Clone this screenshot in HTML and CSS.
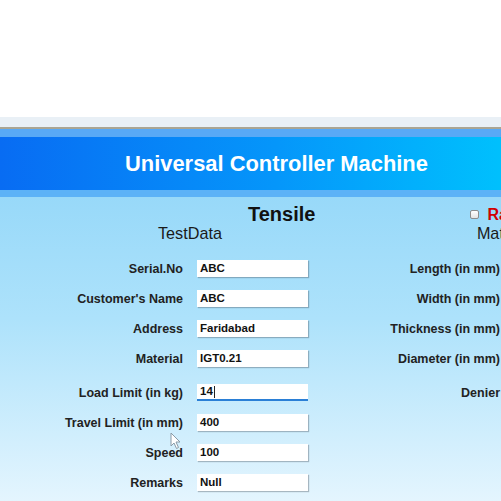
FILE: index.html
```html
<!DOCTYPE html>
<html lang="en">
<head>
    <meta charset="UTF-8">
    <title>Universal Controller Machine</title>
    <link rel="stylesheet" href="styles.css">
</head>
<body>
    <div class="top-space"></div>
    <div class="toolbar-strip"></div>
    <div class="banner">
        <h1>Universal Controller Machine</h1>
    </div>
    <div class="main">
        <div class="title-row">
            <h2>Tensile</h2>
            <label class="raw-check"><span class="check-box"></span><span class="raw-text">Raw Data</span></label>
        </div>
        <div class="sub-row">
            <span class="sub-left">TestData</span>
            <span class="sub-right">Material Data</span>
        </div>
        <div class="form-rows">
            <div class="form-row">
                <label>Serial.No</label>
                <div class="field">ABC</div>
                <label class="right-label">Length (in mm)</label>
            </div>
            <div class="form-row">
                <label>Customer's Name</label>
                <div class="field">ABC</div>
                <label class="right-label">Width (in mm)</label>
            </div>
            <div class="form-row">
                <label>Address</label>
                <div class="field">Faridabad</div>
                <label class="right-label">Thickness (in mm)</label>
            </div>
            <div class="form-row">
                <label>Material</label>
                <div class="field">IGT0.21</div>
                <label class="right-label">Diameter (in mm)</label>
            </div>
            <div class="form-row spaced">
                <label>Load Limit (in kg)</label>
                <div class="field focused">14<span class="caret"></span></div>
                <label class="right-label">Denier</label>
            </div>
            <div class="form-row">
                <label>Travel Limit (in mm)</label>
                <div class="field">400</div>
                <label class="right-label"></label>
            </div>
            <div class="form-row">
                <label>Speed</label>
                <div class="field">100</div>
                <label class="right-label"></label>
            </div>
            <div class="form-row">
                <label>Remarks</label>
                <div class="field">Null</div>
                <label class="right-label"></label>
            </div>
        </div>
        <svg class="pointer" width="12" height="18" viewBox="0 0 12 18">
            <path d="M1 1 L1 14 L4 11 L6.5 16.5 L8.5 15.5 L6 10 L10 10 Z" fill="#fff" stroke="#8a9aa6" stroke-width="1"/>
        </svg>
    </div>
</body>
</html>
```

FILE: styles.css
```css
body {
    margin: 0;
    font-family: "Liberation Sans", Arial, sans-serif;
    overflow: hidden;
    width: 501px;
    height: 501px;
    background: #fff;
}
.top-space {
    height: 117px;
}
.toolbar-strip {
    height: 10px;
    background-color: #e9f0f6;
    border-bottom: 2px solid #a9a594;
}
.banner {
    height: 53px;
    border-top: 8px solid #58a9f6;
    border-bottom: 7px solid #5cb2f7;
    background: linear-gradient(to right, #086cf3, #0596fa 55%, #00c0fd);
    display: flex;
    align-items: center;
    padding-left: 125px;
}
.banner h1 {
    margin: 0;
    color: #fff;
    font-size: 21.9px;
    font-weight: bold;
    white-space: nowrap;
}
.main {
    position: relative;
    height: 304px;
    padding-top: 8px;
    box-sizing: border-box;
    background: linear-gradient(to bottom, #98d9f9, #ade2fb 40%, #e4f5fe);
}
.title-row {
    display: flex;
    align-items: center;
    height: 19px;
    padding-left: 248px;
    white-space: nowrap;
}
.title-row h2 {
    margin: 0;
    font-size: 20px;
    line-height: 19px;
    font-weight: bold;
    color: #111;
}
.raw-check {
    display: flex;
    align-items: center;
    margin-left: 155px;
    flex-shrink: 0;
}
.check-box {
    width: 7px;
    height: 7px;
    border: 1px solid #8d8d8d;
    border-radius: 2px;
    background: linear-gradient(#fff, #e4e4e4);
    margin-right: 8px;
}
.raw-text {
    color: #d10000;
    font-weight: bold;
    font-size: 16px;
}
.sub-row {
    display: flex;
    height: 18px;
    line-height: 18px;
    font-size: 16.2px;
    color: #1a1a1a;
    white-space: nowrap;
}
.sub-left {
    flex-shrink: 0;
    margin-left: 158px;
}
.sub-right {
    flex-shrink: 0;
    margin-left: 255px;
}
.form-rows {
    margin-top: 18px;
    display: flex;
    flex-direction: column;
    gap: 13px;
}
.form-row {
    display: grid;
    grid-template-columns: 183px 111px 178px;
    column-gap: 14px;
    align-items: center;
    height: 17px;
    font-size: 12.5px;
    font-weight: bold;
    color: #222;
    white-space: nowrap;
}
.form-row.spaced {
    margin-top: 4px;
}
.form-row label {
    text-align: right;
}
.field {
    height: 17px;
    line-height: 17px;
    background: #fff;
    box-shadow: 1px 1px 1px rgba(60, 70, 80, 0.35);
    box-sizing: border-box;
    padding-left: 3px;
    font-size: 11.5px;
    color: #111;
    display: flex;
    align-items: center;
}
.field.focused {
    box-shadow: none;
    border-bottom: 2px solid #2a7fd6;
}
.caret {
    display: inline-block;
    width: 1px;
    height: 12px;
    background: #222;
    margin-left: 1px;
}
.pointer {
    position: absolute;
    left: 170px;
    top: 235px;
}
```
